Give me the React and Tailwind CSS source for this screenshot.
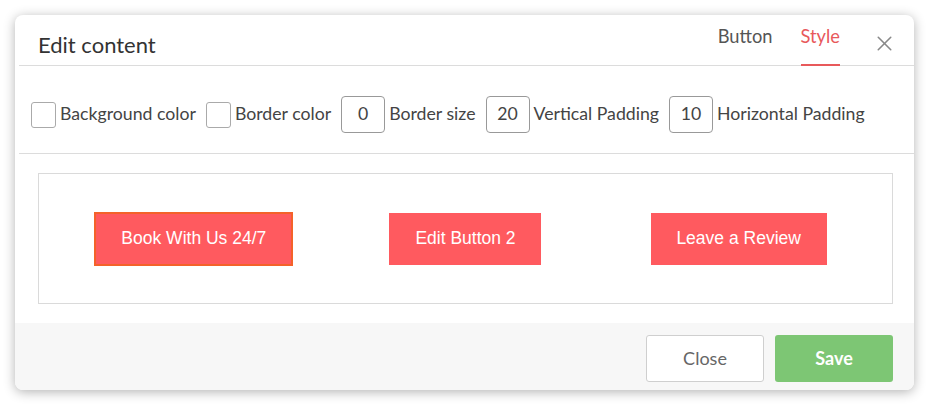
import React, { useState } from "react";
import { X } from "lucide-react";

const font = { fontFamily: "Lato, 'Open Sans', sans-serif" };

export default function App() {
  const [tab, setTab] = useState("Style");

  return (
    <div className="w-[929px] h-[406px] bg-white p-[15px]" style={font}>
      <div className="w-[899px] h-[375px] bg-white rounded-[8px] shadow-[0_2px_12px_rgba(0,0,0,0.3)] flex flex-col overflow-hidden">
        {/* Header */}
        <div className="h-[51px] ml-[4px] border-b border-[#dcdcdc] flex items-center pl-[19px] pr-[17px]">
          <h1 className="text-[22px] mt-[8px] text-[#333]">Edit content</h1>
          <div className="ml-auto flex h-full items-end gap-[28px]">
            {["Button", "Style"].map((t) => (
              <button
                key={t}
                onClick={() => setTab(t)}
                className={`h-full pb-[7px] flex items-center text-[18.3px] border-b-2 -mb-px ${
                  tab === t ? "text-[#e8595b] border-[#e8595b]" : "text-[#555] border-transparent"
                }`}
              >
                {t}
              </button>
            ))}
          </div>
          <X className="ml-[32px] mt-[6px] text-[#888]" size={25} strokeWidth={1.5} />
        </div>

        {/* Toolbar */}
        <div className="h-[88px] ml-[4px] pt-[10px] border-b border-[#dcdcdc] flex items-center pl-[12px] text-[17.7px] text-[#444]">
          <span className="w-[25px] h-[26px] border border-[#aaa] rounded-[3px]" />
          <span className="ml-[4px] mr-[10px]">Background color</span>
          <span className="w-[25px] h-[26px] border border-[#aaa] rounded-[3px]" />
          <span className="ml-[4px] mr-[10px]">Border color</span>
          <NumBox value="0" />
          <span className="ml-[4px] mr-[10px]">Border size</span>
          <NumBox value="20" />
          <span className="ml-[4px] mr-[10px]">Vertical Padding</span>
          <NumBox value="10" />
          <span className="ml-[4px]">Horizontal Padding</span>
        </div>

        {/* Preview */}
        <div className="flex-1 pt-[19px] pl-[23px] pr-[21px] pb-[19px]">
          <div className="h-[131px] border border-[#dadada] grid grid-cols-3 items-center px-[19px]" style={{ fontFamily: "'Liberation Sans', Arial, sans-serif" }}>
            <div className="flex justify-center">
              <span className="h-[54px] w-[199px] flex items-center justify-center bg-[#ff5a5f] border-2 border-[#f4622a] text-white text-[17.5px]">
                Book With Us 24/7
              </span>
            </div>
            <div className="flex justify-center">
              <span className="h-[52px] w-[152px] flex items-center justify-center bg-[#ff5a5f] text-white text-[17.5px]">
                Edit Button 2
              </span>
            </div>
            <div className="flex justify-center">
              <span className="h-[52px] w-[176px] ml-[3px] flex items-center justify-center bg-[#ff5a5f] text-white text-[17.5px]">
                Leave a Review
              </span>
            </div>
          </div>
        </div>

        {/* Footer */}
        <div className="h-[67px] bg-[#f7f7f7] flex items-center justify-end gap-[11px] pr-[21px] pt-[3px]">
          <button className="w-[118px] h-[47px] bg-white border border-[#cfcfcf] rounded-[3px] text-[18px] text-[#666]">
            Close
          </button>
          <button className="w-[118px] h-[47px] bg-[#7dc674] rounded-[3px] text-[18px] font-bold text-white">
            Save
          </button>
        </div>
      </div>
    </div>
  );
}

function NumBox({ value }) {
  return (
    <span className="w-[44px] h-[37px] border border-[#999] rounded-[4px] flex items-center justify-center text-[17.7px] text-[#444]">
      {value}
    </span>
  );
}
